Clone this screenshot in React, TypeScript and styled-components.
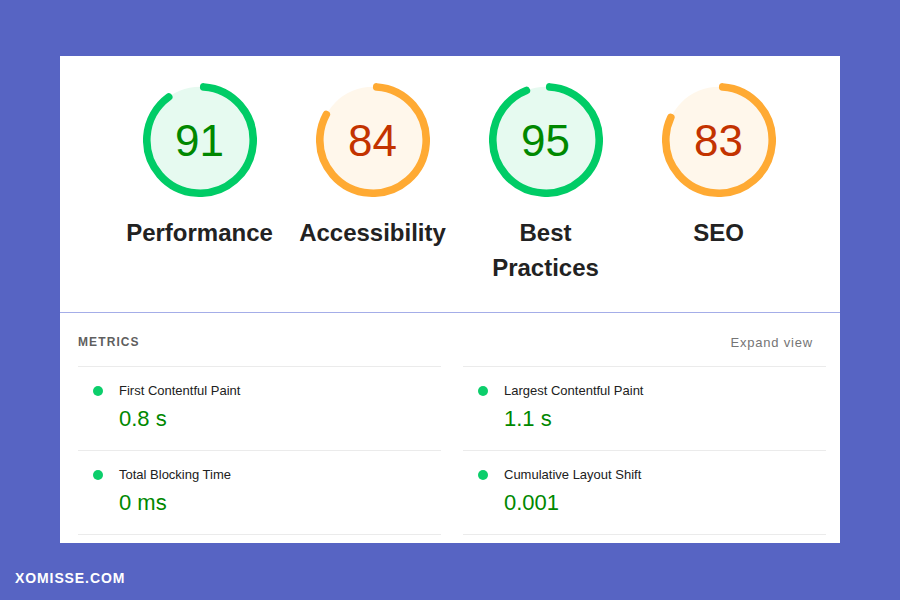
import React from "react";
import styled, { createGlobalStyle } from "styled-components";

const GlobalStyle = createGlobalStyle`
  html, body {
    margin: 0;
    padding: 0;
    background: #5764c3;
  }
  body {
    font-family: "Liberation Sans", Arial, Helvetica, sans-serif;
  }
`;

const Page = styled.div`
  width: 900px;
  height: 600px;
  box-sizing: border-box;
  padding: 56px 60px 0 60px;
  background: #5764c3;
  display: flex;
  flex-direction: column;
`;

const Card = styled.div`
  width: 780px;
  height: 487px;
  background: #ffffff;
  display: flex;
  flex-direction: column;
`;

const GaugeSection = styled.div`
  height: 257px;
  box-sizing: border-box;
  border-bottom: 1px solid #a4ade8;
  padding: 27px 0 0 53px;
  display: grid;
  grid-template-columns: repeat(4, 173px);
  align-items: start;
`;

const GaugeItem = styled.div`
  display: flex;
  flex-direction: column;
  align-items: center;
`;

const Dial = styled.div`
  display: grid;
  width: 114px;
  height: 114px;
  & > * {
    grid-area: 1 / 1;
  }
`;

const Score = styled.div<{ $color: string }>`
  align-self: center;
  justify-self: center;
  font-size: 44px;
  line-height: 44px;
  color: ${(p) => p.$color};
  font-weight: 400;
  padding-top: 2px;
`;

const GaugeLabel = styled.div`
  margin-top: 18px;
  font-size: 24px;
  line-height: 35px;
  font-weight: 700;
  color: #222222;
  text-align: center;
  width: 170px;
`;

const MetricsSection = styled.div`
  display: flex;
  flex-direction: column;
`;

const MetricsHeader = styled.div`
  height: 53px;
  box-sizing: border-box;
  padding: 5px 27px 0 18px;
  display: flex;
  align-items: center;
  justify-content: space-between;
`;

const MetricsTitle = styled.div`
  font-size: 12px;
  font-weight: 700;
  letter-spacing: 1.1px;
  color: #5f5f5f;
`;

const ExpandLink = styled.div`
  font-size: 13px;
  letter-spacing: 0.8px;
  color: #757575;
`;

const MetricsGrid = styled.div`
  padding: 0 14px 0 18px;
  display: grid;
  grid-template-columns: 363px 363px;
  column-gap: 22px;
`;

const MetricRow = styled.div<{ $last: boolean }>`
  height: 84px;
  box-sizing: border-box;
  border-top: 1px solid #ebebeb;
  ${(p) => (p.$last ? "border-bottom: 1px solid #ebebeb; height: 85px;" : "")}
  padding: 16px 0 0 15px;
  display: flex;
  align-items: flex-start;
  gap: 16px;
`;

const Dot = styled.span`
  width: 10px;
  height: 10px;
  border-radius: 50%;
  background: #0cce6b;
  margin-top: 3px;
  flex: none;
`;

const MetricText = styled.div`
  display: flex;
  flex-direction: column;
  gap: 6px;
`;

const MetricName = styled.div`
  font-size: 13px;
  line-height: 16px;
  color: #212121;
`;

const MetricValue = styled.div`
  font-size: 22px;
  line-height: 28px;
  color: #008800;
`;

const Footer = styled.div`
  margin-top: 27px;
  margin-left: -45px;
  font-size: 14px;
  font-weight: 700;
  letter-spacing: 0.9px;
  color: #ffffff;
  line-height: 16px;
`;

type GaugeData = { score: number; label: React.ReactNode; good: boolean };

const gauges: GaugeData[] = [
  { score: 91, label: "Performance", good: true },
  { score: 84, label: "Accessibility", good: false },
  { score: 95, label: <>Best<br />Practices</>, good: true },
  { score: 83, label: "SEO", good: false },
];

const metrics = [
  { name: "First Contentful Paint", value: "0.8 s" },
  { name: "Largest Contentful Paint", value: "1.1 s" },
  { name: "Total Blocking Time", value: "0 ms" },
  { name: "Cumulative Layout Shift", value: "0.001" },
];

const C = 2 * Math.PI * 56;

function Gauge({ score, label, good }: GaugeData) {
  const ring = good ? "#00cc66" : "#ffaa33";
  const fill = good ? "#e6faf0" : "#fff7eb";
  const text = good ? "#008800" : "#c33300";
  const dash = (score / 100) * C - 8;
  return (
    <GaugeItem>
      <Dial>
        <svg width="114" height="114" viewBox="0 0 120 120">
          <circle cx="60" cy="60" r="56" fill={fill} stroke="none" />
          <circle
            cx="60"
            cy="60"
            r="56"
            fill="none"
            stroke={ring}
            strokeWidth="8"
            strokeLinecap="round"
            strokeDasharray={`${dash} ${C}`}
            transform="rotate(-86 60 60)"
          />
        </svg>
        <Score $color={text}>{score}</Score>
      </Dial>
      <GaugeLabel>{label}</GaugeLabel>
    </GaugeItem>
  );
}

export default function App() {
  return (
    <>
      <GlobalStyle />
      <Page>
        <Card>
          <GaugeSection>
            {gauges.map((g) => (
              <Gauge key={g.score} {...g} />
            ))}
          </GaugeSection>
          <MetricsSection>
            <MetricsHeader>
              <MetricsTitle>METRICS</MetricsTitle>
              <ExpandLink>Expand view</ExpandLink>
            </MetricsHeader>
            <MetricsGrid>
              {metrics.map((m, i) => (
                <MetricRow key={m.name} $last={i >= 2}>
                  <Dot />
                  <MetricText>
                    <MetricName>{m.name}</MetricName>
                    <MetricValue>{m.value}</MetricValue>
                  </MetricText>
                </MetricRow>
              ))}
            </MetricsGrid>
          </MetricsSection>
        </Card>
        <Footer>XOMISSE.COM</Footer>
      </Page>
    </>
  );
}
